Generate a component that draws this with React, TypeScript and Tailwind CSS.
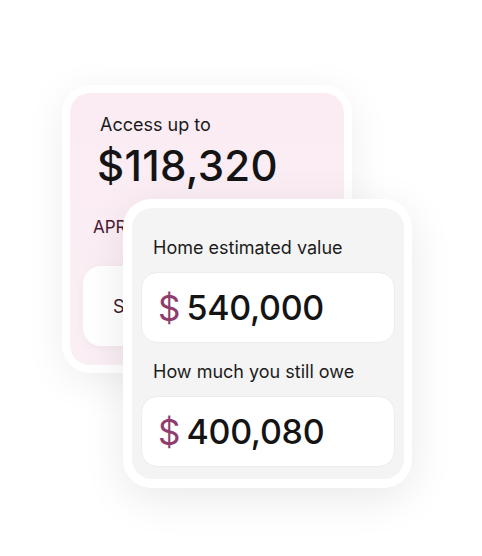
export default function App() {
  return (
    <div className="grid h-[556px] w-[482px] overflow-hidden bg-white font-['Inter','Liberation_Sans',sans-serif]">
      {/* Back card: access amount */}
      <div className="col-start-1 row-start-1 ml-[62px] mt-[85px] h-[288px] w-[290px] self-start justify-self-start rounded-[28px] bg-white p-2 shadow-[0_8px_40px_rgba(0,0,0,0.07)]">
        <div className="flex h-full flex-col rounded-[20px] bg-gradient-to-b from-[#fbecf3] to-[#faeff4] px-[13px] pt-[20px]">
          <p className="ml-[17px] text-[18px] leading-[24px] text-[#1a1a1a]">Access up to</p>
          <p className="ml-[14px] mt-[6px] text-[42px] font-medium leading-[46px] tracking-[0.3px] text-[#141414]">$118,320</p>
          <p className="ml-[10px] mt-[28px] text-[17px] leading-[20px] text-[#4a1a33]">APR 8.99%</p>
          <div className="mt-[29px] flex h-[80px] items-center rounded-[18px] bg-white px-[30px] shadow-[0_2px_10px_rgba(0,0,0,0.04)]">
            <span className="text-[18px] text-[#3d1a2c]">See your offer</span>
          </div>
        </div>
      </div>

      {/* Front card: home values */}
      <div className="col-start-1 row-start-1 ml-[123px] mt-[199px] h-[289px] w-[289px] self-start justify-self-start rounded-[28px] bg-white p-[9px] pr-2 shadow-[0_10px_44px_rgba(0,0,0,0.09)]">
        <div className="flex h-full flex-col rounded-[20px] bg-[#f4f4f4] px-[9px] pt-[28px]">
          <p className="ml-[12px] text-[18px] leading-[24px] text-[#1c1c1c]">Home estimated value</p>
          <div className="mt-3 flex h-[71px] items-center gap-[6px] rounded-[16px] border border-[#ececec] bg-white pl-4">
            <span className="text-[35px] leading-[40px] text-[#8e3d6e]">$</span>
            <span className="text-[34px] font-medium leading-[40px] tracking-[-0.3px] text-[#141414]">540,000</span>
          </div>
          <p className="ml-[12px] mt-[17px] text-[18px] leading-[24px] text-[#1c1c1c]">How much you still owe</p>
          <div className="mt-3 flex h-[71px] items-center gap-[6px] rounded-[16px] border border-[#ececec] bg-white pl-4">
            <span className="text-[35px] leading-[40px] text-[#8e3d6e]">$</span>
            <span className="text-[34px] font-medium leading-[40px] tracking-[-0.3px] text-[#141414]">400,080</span>
          </div>
        </div>
      </div>
    </div>
  );
}
